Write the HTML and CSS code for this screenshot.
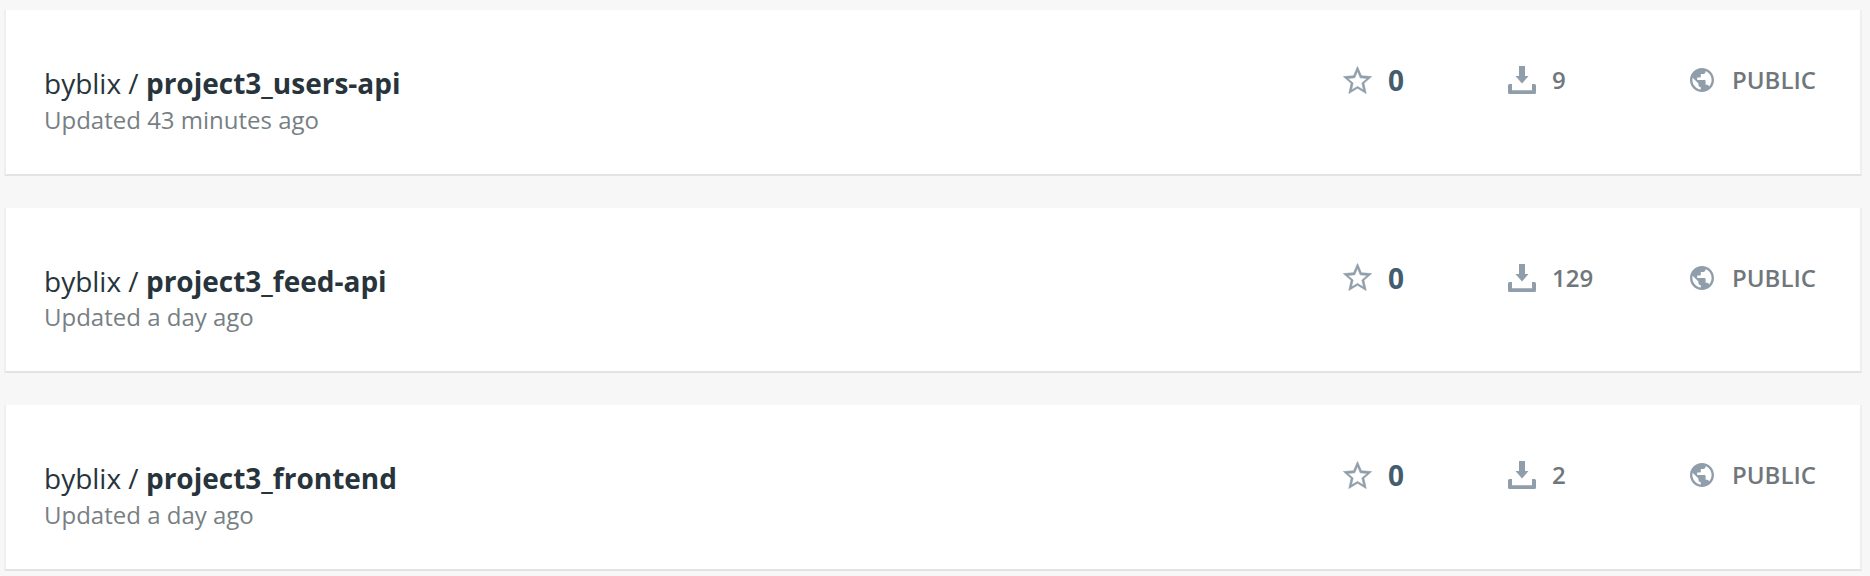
FILE: index.html
```html
<!DOCTYPE html>
<html lang="en">
<head>
<meta charset="utf-8">
<title>Repositories</title>
<link rel="stylesheet" href="styles.css">
</head>
<body>
<svg class="sprite" aria-hidden="true">
  <symbol id="star" viewBox="0 0 28 27"><path d="M14 .5l3.800 8.900 9.800.800-7.400 6.500 2.200 9.900-8.400-5.200-8.400 5.200 2.200-9.900L.400 10.200l9.800-.800zM14 5l-2.600 6.400-6.800.600 5.200 4.500-1.600 6.700 5.800-3.500 5.800 3.500-1.600-6.700 5.200-4.500-6.800-.600z" fill-rule="evenodd" stroke="#8f9eaa" stroke-width=".6" stroke-linejoin="round"/></symbol>
  <symbol id="download" viewBox="0 0 28 28"><path d="M11 0h6v10h3.500L14 17.500 7.500 10H11zM1.500 18H4v6.200h20V18h2.500q1.500 0 1.500 1.500v7q0 1.500-1.500 1.500h-25Q0 28 0 26.500v-7Q0 18 1.500 18z"/></symbol>
  <symbol id="globe" viewBox="2 2 20 20"><path d="M12 2C6.480 2 2 6.480 2 12s4.480 10 10 10 10-4.480 10-10S17.520 2 12 2zm-1 17.930c-3.950-.490-7-3.850-7-7.930 0-.620.080-1.210.210-1.790L9 15v1c0 1.100.900 2 2 2v1.930zm6.900-2.540c-.260-.810-1-1.390-1.900-1.390h-1v-3c0-.550-.450-1-1-1H8v-2h2c.550 0 1-.450 1-1V7h2c1.100 0 2-.900 2-2v-.410c2.930 1.190 5 4.060 5 7.410 0 2.080-.800 3.970-2.100 5.390z"/></symbol>
</svg>
<main class="repos">
  <article class="repo">
    <div class="info">
      <h2 class="title">byblix / <strong>project3_users-api</strong></h2>
      <p class="updated">Updated 43 minutes ago</p>
    </div>
    <div class="stats">
      <div class="stat stars"><svg class="icon-star"><use href="#star"/></svg><span>0</span></div>
      <div class="stat pulls"><svg class="icon-download"><use href="#download"/></svg><span>9</span></div>
      <div class="stat access"><svg class="icon-globe"><use href="#globe"/></svg><span>PUBLIC</span></div>
    </div>
  </article>
  <article class="repo">
    <div class="info">
      <h2 class="title">byblix / <strong>project3_feed-api</strong></h2>
      <p class="updated">Updated a day ago</p>
    </div>
    <div class="stats">
      <div class="stat stars"><svg class="icon-star"><use href="#star"/></svg><span>0</span></div>
      <div class="stat pulls"><svg class="icon-download"><use href="#download"/></svg><span>129</span></div>
      <div class="stat access"><svg class="icon-globe"><use href="#globe"/></svg><span>PUBLIC</span></div>
    </div>
  </article>
  <article class="repo">
    <div class="info">
      <h2 class="title">byblix / <strong>project3_frontend</strong></h2>
      <p class="updated">Updated a day ago</p>
    </div>
    <div class="stats">
      <div class="stat stars"><svg class="icon-star"><use href="#star"/></svg><span>0</span></div>
      <div class="stat pulls"><svg class="icon-download"><use href="#download"/></svg><span>2</span></div>
      <div class="stat access"><svg class="icon-globe"><use href="#globe"/></svg><span>PUBLIC</span></div>
    </div>
  </article>
</main>
</body>
</html>
```
FILE: styles.css
```css
* { box-sizing: border-box; }
body {
  margin: 0;
  background: #f7f7f7;
  font-family: "Open Sans", sans-serif;
  color: #27343b;
}
.sprite { display: none; }
.repos {
  display: flex;
  flex-direction: column;
  gap: 32px;
  padding: 10px 8px 0 4px;
}
.repo {
  display: flex;
  justify-content: space-between;
  height: 165.5px;
  padding: 0 0 0 38px;
  background: #fff;
  border: 2px solid #efefef;
  border-top: 0;
  border-bottom-color: #e0e4e7;
}
.info { padding-top: 53.1px; }
.title {
  margin: 0;
  font-size: 28px;
  line-height: 40px;
  font-weight: 400;
}
.title strong { font-weight: 700; }
.updated {
  margin: -0.2px 0 0;
  font-size: 24px;
  line-height: 33.3px;
  color: #777f84;
}
.stats {
  display: grid;
  grid-template-columns: 164px 182px 170px;
  height: 40px;
  margin-top: 50px;
}
.stat {
  display: flex;
  align-items: center;
  font-size: 24px;
  line-height: 40px;
  font-weight: 600;
  color: #70777c;
}
.stat svg { flex: none; fill: #8f9eaa; overflow: visible; }
.stars span { font-size: 28px; font-weight: 700; color: #445d6e; }
.icon-star { width: 29px; height: 28px; margin: -1px 16px 0 -1px; }
.icon-download { width: 28px; height: 28px; margin-right: 16px; }
.icon-globe { width: 24px; height: 24px; margin-right: 18px; }
```
